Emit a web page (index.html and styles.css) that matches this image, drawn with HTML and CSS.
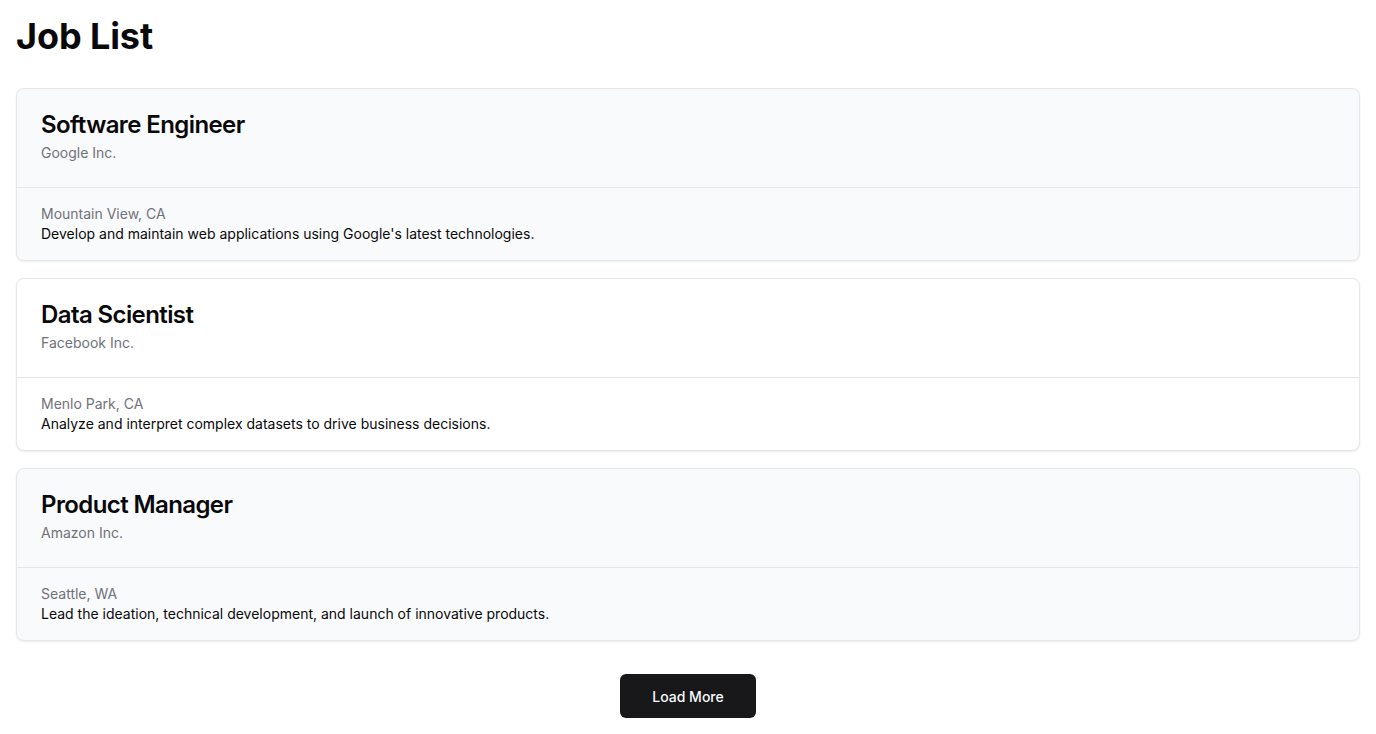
FILE: index.html
```html
<!DOCTYPE html>
<html lang="en">
<head>
<meta charset="utf-8">
<title>Job List</title>
<link rel="stylesheet" href="styles.css">
</head>
<body>
<main class="page">
  <h1 class="page-title">Job List</h1>
  <div class="job-list">
    <article class="card card-gray">
      <header class="card-header">
        <h2 class="card-title">Software Engineer</h2>
        <p class="card-desc">Google Inc.</p>
      </header>
      <div class="card-content">
        <p class="location">Mountain View, CA</p>
        <p class="summary">Develop and maintain web applications using Google's latest technologies.</p>
      </div>
    </article>
    <article class="card">
      <header class="card-header">
        <h2 class="card-title">Data Scientist</h2>
        <p class="card-desc">Facebook Inc.</p>
      </header>
      <div class="card-content">
        <p class="location">Menlo Park, CA</p>
        <p class="summary">Analyze and interpret complex datasets to drive business decisions.</p>
      </div>
    </article>
    <article class="card card-gray">
      <header class="card-header">
        <h2 class="card-title">Product Manager</h2>
        <p class="card-desc">Amazon Inc.</p>
      </header>
      <div class="card-content">
        <p class="location">Seattle, WA</p>
        <p class="summary">Lead the ideation, technical development, and launch of innovative products.</p>
      </div>
    </article>
  </div>
  <div class="actions">
    <button class="btn" type="button">Load More</button>
  </div>
</main>
</body>
</html>
```

FILE: styles.css
```css
* { box-sizing: border-box; }
html, body { margin: 0; padding: 0; }
body {
  font-family: Inter, "Noto Sans", sans-serif;
  color: #09090b;
  background: #ffffff;
}
.page { padding: 16px; }
.page-title {
  margin: 0 0 32px;
  font-size: 36px;
  line-height: 40px;
  font-weight: 700;
  letter-spacing: -0.1px;
}
.job-list {
  display: flex;
  flex-direction: column;
  gap: 17px;
}
.card {
  border: 1px solid #e5e7eb;
  border-radius: 8px;
  background: #ffffff;
  box-shadow: 0 1px 2px rgba(0,0,0,0.08);
}
.card-gray { background: #f9fafb; }
.card-header {
  padding: 24px;
  display: flex;
  flex-direction: column;
  gap: 6px;
}
.card-title {
  margin: 0;
  font-size: 24px;
  line-height: 24px;
  font-weight: 600;
  letter-spacing: -0.6px;
}
.card-desc {
  margin: 0;
  font-size: 14px;
  line-height: 20px;
  color: #71717a;
}
.card-content {
  border-top: 1px solid #e5e7eb;
  padding: 16px 24px;
}
.location {
  margin: 0;
  font-size: 14px;
  line-height: 20px;
  color: #71717a;
}
.summary {
  margin: 0;
  font-size: 14px;
  line-height: 20px;
}
.actions {
  display: flex;
  justify-content: center;
  margin-top: 33px;
}
.btn {
  height: 44px;
  padding: 0 32px;
  border: none;
  border-radius: 6px;
  background: #18181b;
  color: #fafafa;
  font-family: Inter, "Noto Sans", sans-serif;
  font-size: 14px;
  font-weight: 500;
  cursor: pointer;
}
```
